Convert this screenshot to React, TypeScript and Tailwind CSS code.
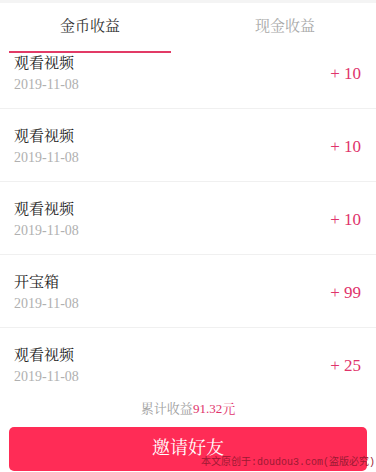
const FONT = '"Liberation Serif", "Noto Serif CJK SC", "Noto Sans CJK SC", serif'

type Record = { title: string; date: string; amount: number }

const RECORDS: Record[] = [
  { title: '观看视频', date: '2019-11-08', amount: 10 },
  { title: '观看视频', date: '2019-11-08', amount: 10 },
  { title: '观看视频', date: '2019-11-08', amount: 10 },
  { title: '开宝箱', date: '2019-11-08', amount: 99 },
  { title: '观看视频', date: '2019-11-08', amount: 25 },
]

export default function App() {
  return (
    <div
      className="relative w-[376px] h-[472px] bg-white flex flex-col overflow-hidden"
      style={{ fontFamily: FONT }}
    >
      <div className="h-[3px] bg-[#f4f4f4] shrink-0" />

      {/* Tabs */}
      <div className="relative z-10 flex h-[50px] bg-white shrink-0">
        <div className="relative w-[180px] flex items-center justify-center text-[15px] text-[#333]">
          <span className="-mt-[4px]">金币收益</span>
          <div className="absolute left-[9px] right-[9px] bottom-0 h-[2px] bg-[#e23a66]" />
        </div>
        <div className="w-[182px] ml-auto flex items-center justify-center text-[15px] text-[#a8a8a8]">
          <span className="-mt-[4px]">现金收益</span>
        </div>
      </div>

      {/* List, scrolled a bit */}
      <div className="h-[339px] overflow-hidden shrink-0">
        <div className="-mt-[17px]">
          {RECORDS.map((r, i) => (
            <div
              key={i}
              className="h-[73px] border-b border-[#f0f0f0] pl-[14px] pr-[15px] flex items-center justify-between"
            >
              <div className="flex flex-col mt-[3px]">
                <span className="text-[15px] leading-[20px] text-[#222]">{r.title}</span>
                <span className="mt-[3px] text-[14px] leading-[18px] text-[#b0b0b0]">{r.date}</span>
              </div>
              <span className="text-[17px] text-[#e0336b] mt-[3px]">+ {r.amount}</span>
            </div>
          ))}
        </div>
      </div>

      {/* Footer */}
      <div className="flex justify-center pt-[8px] text-[13px] leading-[18px]">
        <span className="text-[#a0a0a0]">累计收益</span>
        <span className="text-[#e0336b]">91.32元</span>
      </div>
      <button className="mx-[9px] mt-[9px] h-[44px] rounded-[5px] bg-[#ff2c56] text-white text-[18px] flex items-center justify-center">
        <span className="-mt-[2px]">邀请好友</span>
      </button>

      {/* Watermark */}
      <div
        className="absolute right-[1px] bottom-[3px] text-[10px] leading-[13px] text-[#9c1a33]"
        style={{ fontFamily: '"Liberation Mono", "Noto Sans CJK SC", monospace' }}
      >
        本文原创于:doudou3.com(盗版必究)
      </div>
    </div>
  )
}
